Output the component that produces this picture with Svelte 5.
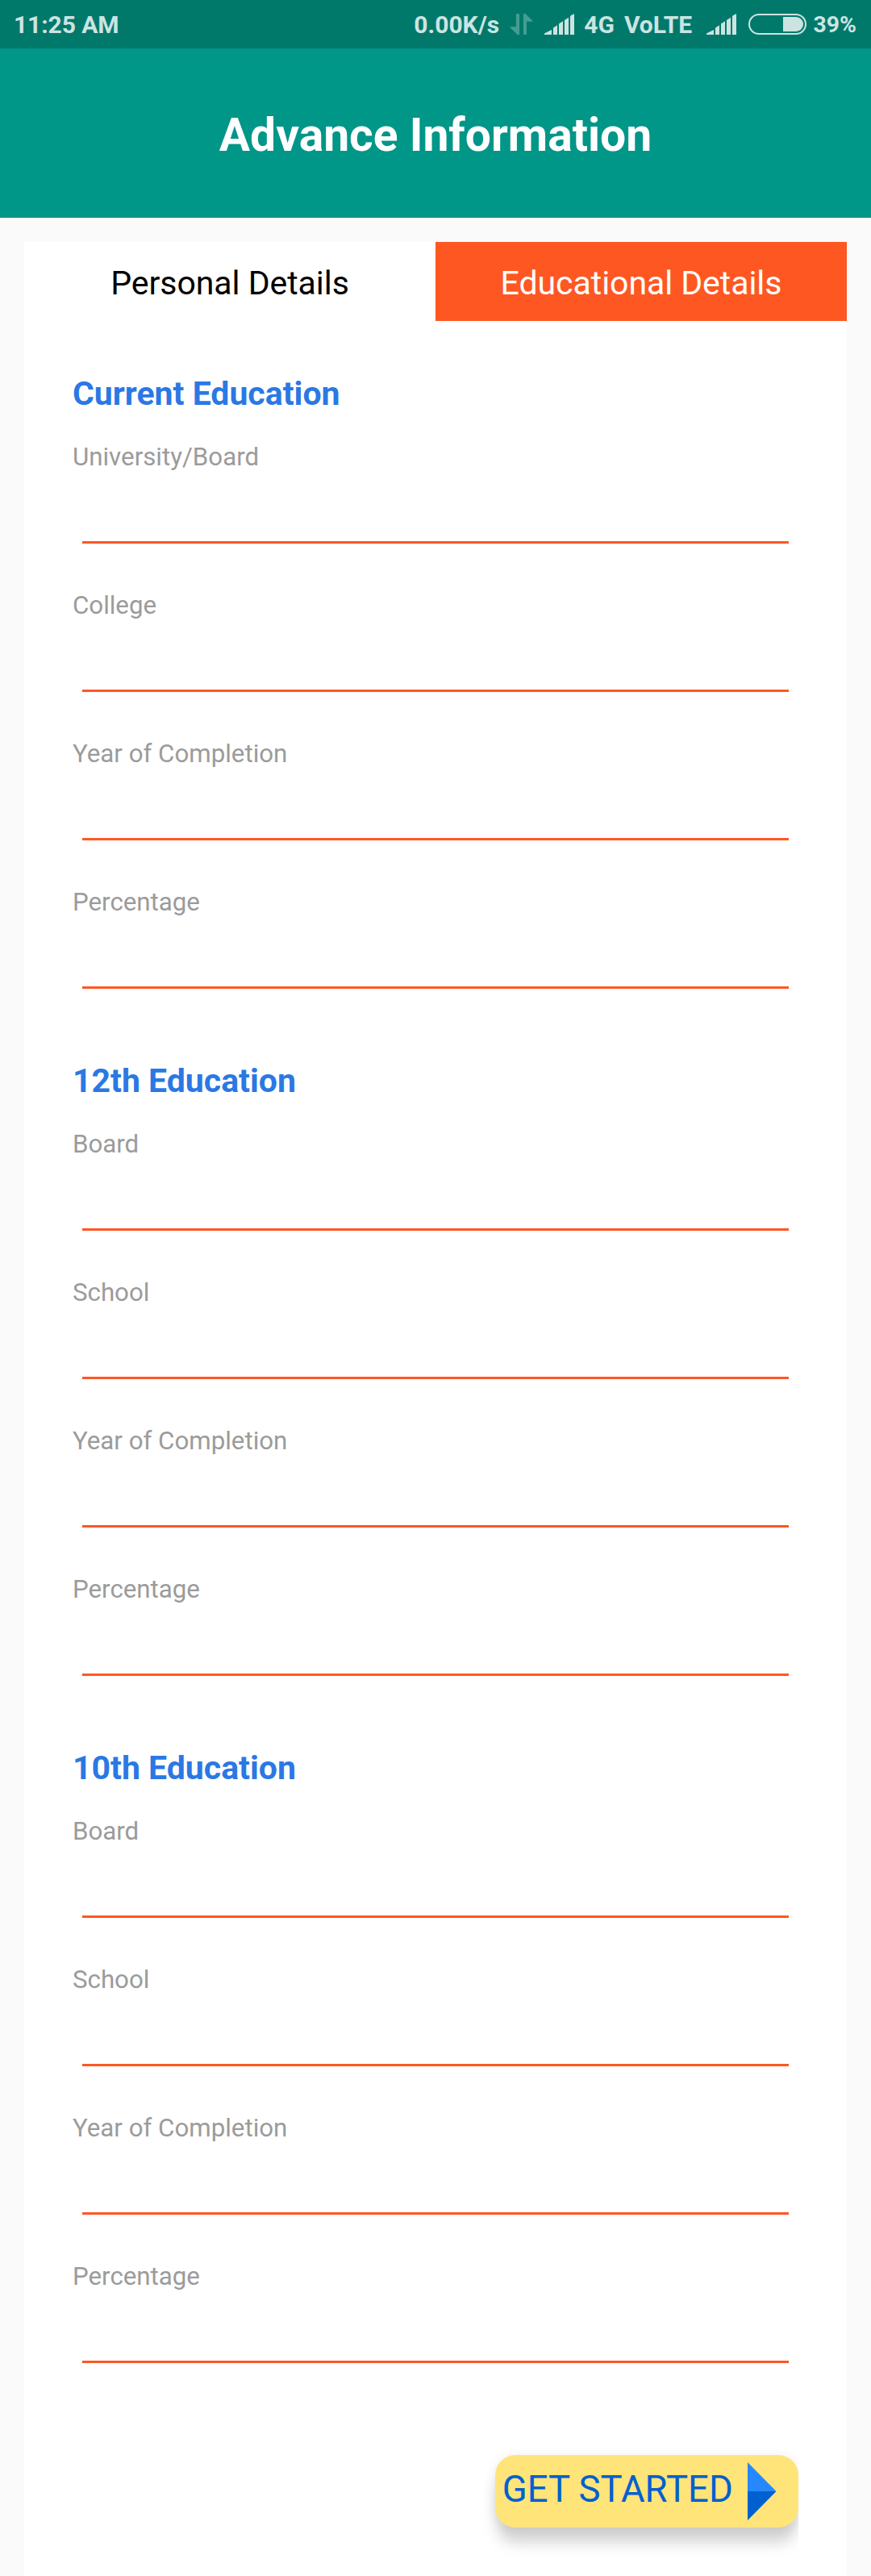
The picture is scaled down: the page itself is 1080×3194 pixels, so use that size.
<script>
  const sections = [
    { title: 'Current Education', fields: ['University/Board', 'College', 'Year of Completion', 'Percentage'] },
    { title: '12th Education', fields: ['Board', 'School', 'Year of Completion', 'Percentage'] },
    { title: '10th Education', fields: ['Board', 'School', 'Year of Completion', 'Percentage'] },
  ];
</script>

{#snippet signal()}
  <svg class="signal" width="37" height="26" viewBox="0 0 37 26">
    <path d="M0 26V24.6L8.4 20.2H9V26Z" />
    <path d="M11 26V17.6L16 14.3V26Z" />
    <path d="M18 26V12.6L23 9.3V26Z" />
    <path d="M25 26V8L30 4.7V26Z" />
    <path d="M32 26V3.6Q32 2.8 32.8 2.2L36 .4Q37 0 37 1V26Z" />
  </svg>
{/snippet}

<div class="screen">
  <div class="status">
    <span class="clock">11:25 AM</span>
    <span class="speed">0.00K/s</span>
    <svg class="transfer" width="29" height="26" viewBox="0 0 29 26">
      <path d="M8 1Q8 0 9 0H11Q12 0 12 1V26H9.5L.5 17V16.2H8Z" />
      <path d="M17 0H19.5L28.5 9V9.8H21V25Q21 26 20 26H18Q17 26 17 25Z" />
    </svg>
    {@render signal()}
    <span class="network">4G</span>
    <span class="volte">VoLTE</span>
    <div class="second">{@render signal()}</div>
    <svg class="battery" width="72" height="26" viewBox="0 0 72 26">
      <rect x="1" y="1" width="70" height="24" rx="12" fill="none" stroke="#cce4e1" stroke-width="2" />
      <path d="M43 4H59A9 9 0 0 1 59 22H43Z" />
    </svg>
    <span class="percent">39%</span>
  </div>

  <header><h1>Advance Information</h1></header>

  <main>
    <nav>
      <div class="tab">Personal Details</div>
      <div class="tab active">Educational Details</div>
    </nav>

    <form>
      {#each sections as section}
        <section>
          <h2>{section.title}</h2>
          {#each section.fields as field}
            <div class="field">
              <div class="label">{field}</div>
              <div class="line"></div>
            </div>
          {/each}
        </section>
      {/each}

      <div class="actions">
        <div class="start">
          <span>GET STARTED</span>
          <svg width="36" height="72" viewBox="0 0 36 72">
            <path d="M0 0L35.5 36H0Z" fill="#2688ff" />
            <path d="M0 36H35.5L0 72Z" fill="#0060d0" />
          </svg>
        </div>
      </div>
    </form>
  </main>
</div>

<style>
  :global(body) {
    background: #fafafa;
  }
  .screen {
    width: 1080px;
    height: 3194px;
    display: flex;
    flex-direction: column;
    overflow: hidden;
    font-family: Roboto, sans-serif;
    background: #fafafa;
  }
  .status {
    flex: none;
    display: flex;
    align-items: center;
    box-sizing: border-box;
    height: 60px;
    padding: 0 18px 0 17px;
    background: #00796b;
    color: #cce4e1;
    fill: #cce4e1;
    font-size: 30px;
    font-weight: 700;
    line-height: 36px;
    white-space: nowrap;
  }
  .status span {
    padding-top: 1px;
  }
  svg {
    display: block;
    flex: none;
  }
  .clock {
    margin-right: auto;
    letter-spacing: -0.1px;
  }
  .transfer {
    margin: 0 14px 0 13px;
    fill: #449d93;
  }
  .network {
    margin: 0 12px;
  }
  .volte {
    margin-right: 18px;
  }
  .battery {
    margin: 0 8.5px 0 15px;
  }
  .percent {
    font-size: 28.3px;
  }
  header {
    flex: none;
    display: flex;
    align-items: center;
    justify-content: center;
    height: 210px;
    background: #009688;
  }
  h1 {
    margin: 0;
    padding-top: 4px;
    font-size: 57px;
    line-height: 67px;
    font-weight: 700;
    color: #fff;
  }
  main {
    flex: 1;
    margin: 30px 30px 0;
    background: #fff;
  }
  nav {
    display: flex;
    height: 98px;
  }
  .tab {
    flex: 1;
    text-align: center;
    font-size: 41px;
    line-height: 102px;
    letter-spacing: -0.05px;
    color: #000;
  }
  .active {
    background: #ff5722;
    color: #fff;
  }
  form {
    padding: 66px 60px 0;
  }
  section {
    padding-bottom: 32px;
  }
  h2 {
    margin: 0 0 36px;
    font-size: 41px;
    line-height: 48px;
    font-weight: 700;
    color: #2b78e4;
  }
  .field {
    padding-bottom: 58px;
  }
  .label {
    font-size: 31.25px;
    line-height: 37px;
    color: #9b9b9b;
  }
  .line {
    height: 3px;
    margin: 86px 12px 0;
    background: #ff5722;
  }
  .actions {
    display: flex;
    justify-content: flex-end;
    padding-top: 24px;
    clip-path: inset(-20px 0 -60px 0);
  }
  .start {
    display: flex;
    align-items: center;
    box-sizing: border-box;
    width: 376px;
    height: 90px;
    padding-left: 8.7px;
    border-radius: 25px;
    background: #ffe479;
    color: #0060d0;
    font-size: 45.5px;
    line-height: 54px;
    white-space: nowrap;
    box-shadow:
      0 21px 18px -2px rgba(0, 0, 0, 0.17),
      0 2px 16px 0 rgba(0, 0, 0, 0.08);
  }
  .start span {
    width: 304.3px;
    margin-top: -4px;
  }
</style>
